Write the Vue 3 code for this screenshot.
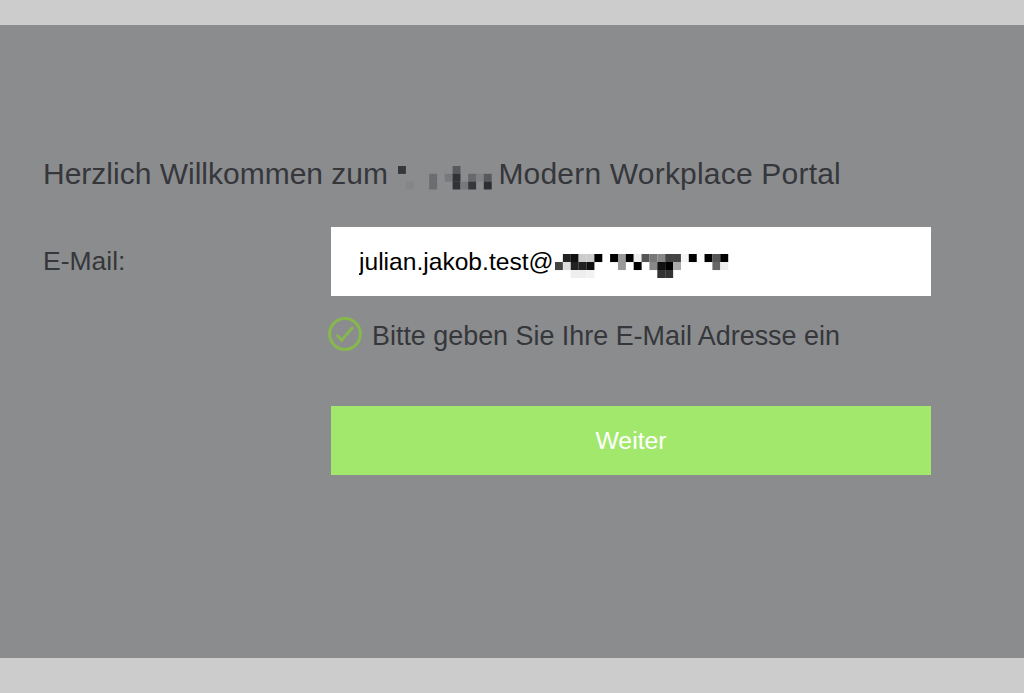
<script setup>
const headCells = [
  [0,0,1,'#35373b'],[1,2,1,'#858688'],[4,1,1,'#6c6d70'],[4,2,1,'#6c6d70'],[6,1,1,'#78797c'],
  [7,0,1,'#57595c'],[7,1,1,'#303236'],[7,2,1,'#303236'],[8,2,1,'#78797c'],[9,1,1,'#68696c'],
  [9,2,1,'#35373b'],[10,1,1,'#808184'],[11,1,1,'#57595c'],[11,2,1,'#2c2e33']
]
const inputCells = [
  [1,0,'#222'],[2,0,'#111'],[3,0,'#ccc'],[4,0,'#ccc'],[5,0,'#000'],[7,0,'#000'],[8,0,'#999'],[9,0,'#000'],
  [10,0,'#eee'],[11,0,'#555'],[12,0,'#777'],[13,0,'#888'],[14,0,'#444'],[15,0,'#444'],[16,0,'#f5f5f5'],
  [17,0,'#000'],[19,0,'#000'],[20,0,'#555'],[21,0,'#000'],
  [0,1,'#444'],[1,1,'#ddd'],[2,1,'#222'],[3,1,'#222'],[4,1,'#111'],[8,1,'#999'],[10,1,'#000'],[12,1,'#888'],
  [13,1,'#111'],[14,1,'#000'],[15,1,'#aaa'],[20,1,'#666'],[21,1,'#eee'],
  [2,2,'#eee'],[3,2,'#eee'],[4,2,'#f2f2f2'],[13,2,'#333'],[14,2,'#333']
]
</script>

<template>
  <div class="page">
    <div class="bar top"></div>
    <main class="panel">
      <h1 class="title">Herzlich Willkommen zum <svg class="mosaic-head" width="94" height="24" viewBox="0 0 94 24" aria-hidden="true"><rect v-for="(c, i) in headCells" :key="i" :x="c[0] * 7.8" :y="c[1] * 7.8" width="7.9" height="7.9" :fill="c[3]" /></svg><span class="title-end">Modern Workplace Portal</span></h1>
      <form class="form" @submit.prevent>
        <label class="label" for="email">E-Mail:</label>
        <div class="field">
          <input id="email" class="input" type="text" value="julian.jakob.test@" />
          <svg class="mosaic-input" width="174" height="24" viewBox="0 0 174 24" aria-hidden="true"><rect v-for="(c, i) in inputCells" :key="i" :x="c[0] * 7.87" :y="c[1] * 8" width="7.95" height="8.05" :fill="c[2]" /></svg>
        </div>
        <div class="hint">
          <svg class="check" width="36" height="36" viewBox="0 0 36 36" aria-hidden="true">
            <circle cx="18" cy="18" r="15.4" fill="none" stroke="#86b84c" stroke-width="3" />
            <path d="M9.8 18.8 L14.6 24.4 L26 11" fill="none" stroke="#86b84c" stroke-width="2.8" />
          </svg>
          <span>Bitte geben Sie Ihre E-Mail Adresse ein</span>
        </div>
        <button class="submit" type="submit">Weiter</button>
      </form>
    </main>
    <div class="bar bottom"></div>
  </div>
</template>

<style scoped>
.page {
  display: flex;
  flex-direction: column;
  width: 1024px;
  height: 693px;
  overflow: hidden;
  font-family: "Liberation Sans", Arial, sans-serif;
  color: #35373b;
}
.bar {
  background: #cccccc;
}
.top {
  height: 25px;
}
.bottom {
  height: 35px;
}
.panel {
  flex: 1;
  background: #8b8c8e;
  padding: 129px 93px 0 43px;
}
.title {
  margin: 0;
  font-size: 30px;
  font-weight: 400;
  line-height: 40px;
  white-space: nowrap;
}
.mosaic-head {
  vertical-align: -6px;
  margin-left: 2px;
}
.title-end {
  margin-left: 6px;
  letter-spacing: 0.2px;
}
.form {
  display: grid;
  grid-template-columns: 288px 600px;
  margin-top: 33px;
}
.label {
  font-size: 26.5px;
  line-height: 69px;
}
.field {
  position: relative;
}
.input {
  display: block;
  box-sizing: border-box;
  width: 600px;
  height: 69px;
  border: 0;
  padding: 0 28px;
  background: #fff;
  color: #000;
  font: 24.6px "Liberation Sans", Arial, sans-serif;
}
.mosaic-input {
  position: absolute;
  left: 224px;
  top: 27px;
}
.hint {
  grid-column: 2;
  display: flex;
  align-items: center;
  gap: 9px;
  margin-top: 22px;
  margin-left: -4px;
  height: 36px;
  font-size: 26.9px;
}
.check {
  margin-top: -4px;
}
.submit {
  grid-column: 2;
  height: 69px;
  margin-top: 52px;
  border: 0;
  padding: 0;
  background: #a2e86c;
  color: #fff;
  font: 24.8px "Liberation Sans", Arial, sans-serif;
}
</style>
